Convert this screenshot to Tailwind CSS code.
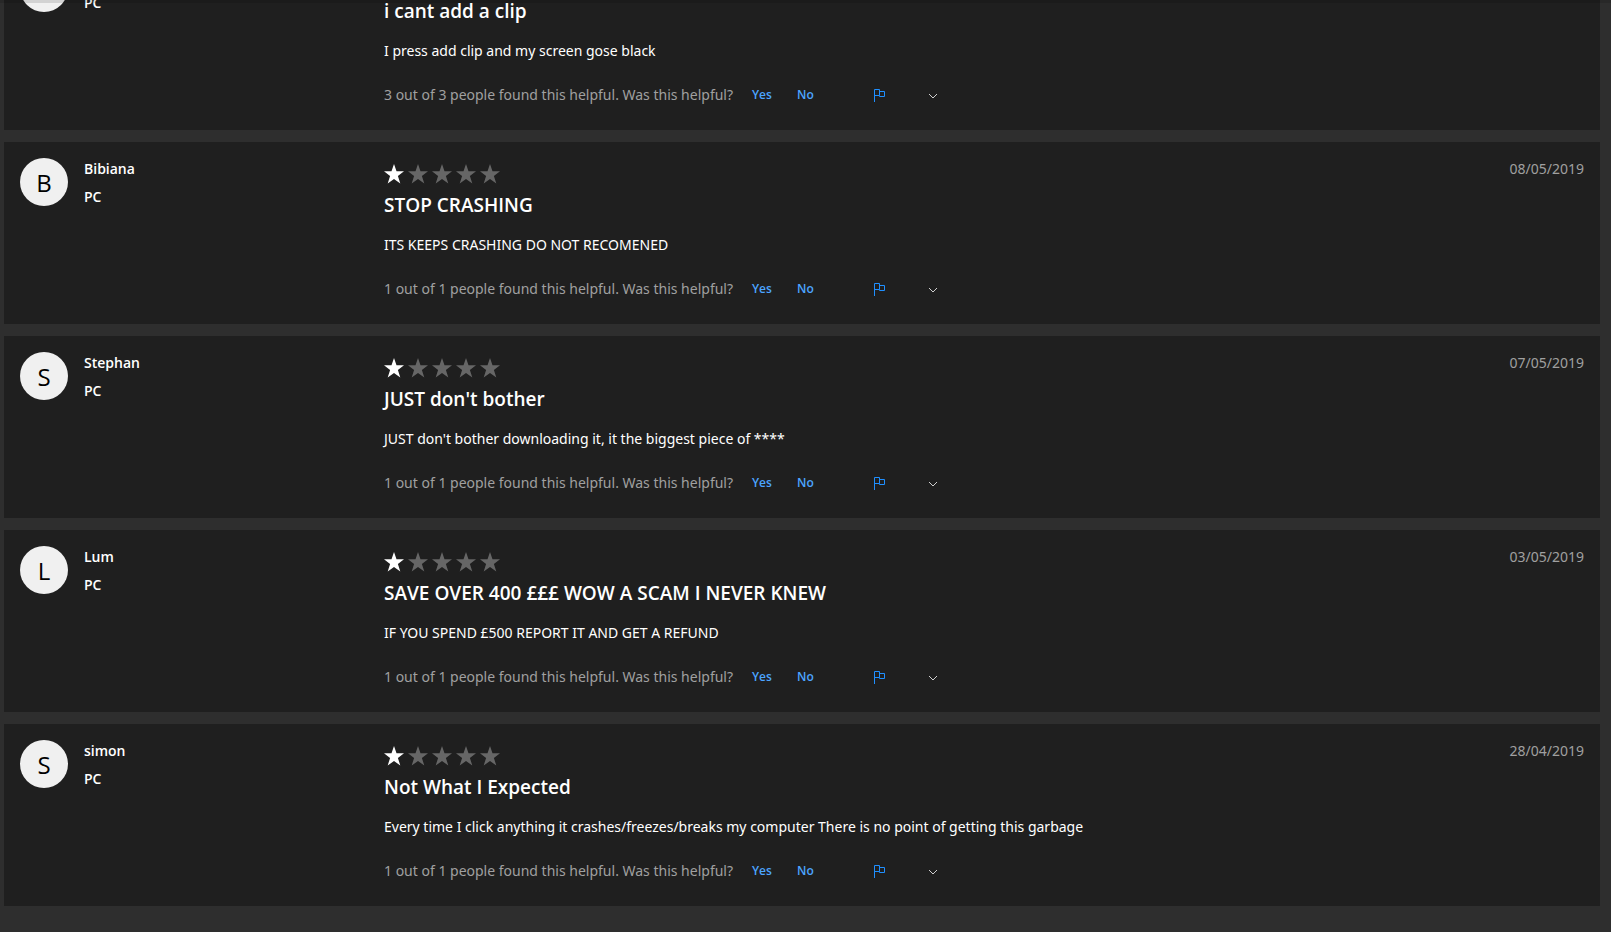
<!DOCTYPE html>
<html lang="en-GB">
<head>
  <meta charset="UTF-8" />
  <meta name="viewport" content="width=device-width, initial-scale=1.0" />
  <title>Reviews</title>
  <script src="https://cdn.jsdelivr.net/npm/@tailwindcss/browser@4"></script>
</head>
<body class="min-h-screen bg-[#2e2e2e] font-['Open_Sans','Noto_Sans',sans-serif] text-sm text-white overflow-x-hidden">

  <!-- Icons -->
  <svg class="hidden">
    <symbol id="star" viewBox="0 0 24 24">
      <path fill="currentColor" d="M10 2l2.5 7.2H20l-6.1 4.7 2.4 7.6L10 17l-6.3 4.5 2.4-7.6L0 9.2h7.5z" />
    </symbol>
    <symbol id="flag" viewBox="0 0 12 13">
      <path fill="none" stroke="currentColor" d="M.5 13V.5h5v6H.5M5.5 2.5h5v5h-5v-1" />
    </symbol>
    <symbol id="chevron" viewBox="0 0 10 6">
      <path fill="none" stroke="currentColor" d="M1 1l4 4 4-4" />
    </symbol>
  </svg>

  <!-- Shadow of the page header -->
  <div class="fixed inset-x-0 top-0 h-[3px] bg-black/12"></div>

  <main class="-mt-[52px] ml-1 mr-[11px] space-y-3">

    <!-- Review scrolled half under the header -->
    <article class="flex bg-[#1f1f1f] px-4 pt-4 pb-[25px]">
      <div class="flex w-[364px] shrink-0 gap-4">
        <div class="size-12 rounded-full bg-[#f0f0f0]"></div>
        <p class="pt-[29px] leading-5 font-semibold">PC</p>
      </div>
      <div class="grow pt-[33px]">
        <h2 class="text-[19px] leading-7 font-semibold">i cant add a clip</h2>
        <p class="mt-4 font-['Noto_Sans','Open_Sans',sans-serif] leading-5">I press add clip and my screen gose black</p>
        <div class="mt-6 flex h-5 items-center leading-5">
          <p class="w-[368px] whitespace-nowrap font-['Noto_Sans','Open_Sans',sans-serif] text-[#a0a0a0]">3 out of 3 people found this helpful. Was this helpful?</p>
          <button class="w-[45px] text-left text-xs font-semibold text-[#4ca5ff]">Yes</button>
          <button class="w-[77px] text-left text-xs font-semibold text-[#4ca5ff]">No</button>
          <button class="w-[54px] text-left text-[#1f8fff]" aria-label="Report"><svg class="h-[13px] w-3"><use href="#flag" /></svg></button>
          <button class="pt-0.5 text-[#d0d0d0]" aria-label="More"><svg class="h-1.5 w-2.5"><use href="#chevron" /></svg></button>
        </div>
      </div>
    </article>

    <article class="flex bg-[#1f1f1f] px-4 pt-4 pb-[25px]">
      <div class="flex w-[364px] shrink-0 gap-4">
        <div class="flex size-12 items-center justify-center rounded-full bg-[#f0f0f0] pt-0.5 text-2xl text-black">B</div>
        <div class="pt-px leading-5">
          <p class="font-semibold">Bibiana</p>
          <p class="mt-2 font-semibold">PC</p>
        </div>
      </div>
      <div class="grow pt-1">
        <div class="flex" role="img" aria-label="1 out of 5 stars">
          <svg class="size-6"><use href="#star" /></svg>
          <svg class="size-6 text-[#666]"><use href="#star" /></svg>
          <svg class="size-6 text-[#666]"><use href="#star" /></svg>
          <svg class="size-6 text-[#666]"><use href="#star" /></svg>
          <svg class="size-6 text-[#666]"><use href="#star" /></svg>
        </div>
        <h2 class="mt-[5px] text-[19px] leading-7 font-semibold">STOP CRASHING</h2>
        <p class="mt-4 font-['Noto_Sans','Open_Sans',sans-serif] leading-5">ITS KEEPS CRASHING DO NOT RECOMENED</p>
        <div class="mt-6 flex h-5 items-center leading-5">
          <p class="w-[368px] whitespace-nowrap font-['Noto_Sans','Open_Sans',sans-serif] text-[#a0a0a0]">1 out of 1 people found this helpful. Was this helpful?</p>
          <button class="w-[45px] text-left text-xs font-semibold text-[#4ca5ff]">Yes</button>
          <button class="w-[77px] text-left text-xs font-semibold text-[#4ca5ff]">No</button>
          <button class="w-[54px] text-left text-[#1f8fff]" aria-label="Report"><svg class="h-[13px] w-3"><use href="#flag" /></svg></button>
          <button class="pt-0.5 text-[#d0d0d0]" aria-label="More"><svg class="h-1.5 w-2.5"><use href="#chevron" /></svg></button>
        </div>
      </div>
      <time class="pt-px font-['Noto_Sans','Open_Sans',sans-serif] leading-5 text-[#a0a0a0]" datetime="2019-05-08">08/05/2019</time>
    </article>

    <article class="flex bg-[#1f1f1f] px-4 pt-4 pb-[25px]">
      <div class="flex w-[364px] shrink-0 gap-4">
        <div class="flex size-12 items-center justify-center rounded-full bg-[#f0f0f0] pt-0.5 text-2xl text-black">S</div>
        <div class="pt-px leading-5">
          <p class="font-semibold">Stephan</p>
          <p class="mt-2 font-semibold">PC</p>
        </div>
      </div>
      <div class="grow pt-1">
        <div class="flex" role="img" aria-label="1 out of 5 stars">
          <svg class="size-6"><use href="#star" /></svg>
          <svg class="size-6 text-[#666]"><use href="#star" /></svg>
          <svg class="size-6 text-[#666]"><use href="#star" /></svg>
          <svg class="size-6 text-[#666]"><use href="#star" /></svg>
          <svg class="size-6 text-[#666]"><use href="#star" /></svg>
        </div>
        <h2 class="mt-[5px] text-[19px] leading-7 font-semibold">JUST don't bother</h2>
        <p class="mt-4 font-['Noto_Sans','Open_Sans',sans-serif] leading-5">JUST don't bother downloading it, it the biggest piece of ****</p>
        <div class="mt-6 flex h-5 items-center leading-5">
          <p class="w-[368px] whitespace-nowrap font-['Noto_Sans','Open_Sans',sans-serif] text-[#a0a0a0]">1 out of 1 people found this helpful. Was this helpful?</p>
          <button class="w-[45px] text-left text-xs font-semibold text-[#4ca5ff]">Yes</button>
          <button class="w-[77px] text-left text-xs font-semibold text-[#4ca5ff]">No</button>
          <button class="w-[54px] text-left text-[#1f8fff]" aria-label="Report"><svg class="h-[13px] w-3"><use href="#flag" /></svg></button>
          <button class="pt-0.5 text-[#d0d0d0]" aria-label="More"><svg class="h-1.5 w-2.5"><use href="#chevron" /></svg></button>
        </div>
      </div>
      <time class="pt-px font-['Noto_Sans','Open_Sans',sans-serif] leading-5 text-[#a0a0a0]" datetime="2019-05-07">07/05/2019</time>
    </article>

    <article class="flex bg-[#1f1f1f] px-4 pt-4 pb-[25px]">
      <div class="flex w-[364px] shrink-0 gap-4">
        <div class="flex size-12 items-center justify-center rounded-full bg-[#f0f0f0] pt-0.5 text-2xl text-black">L</div>
        <div class="pt-px leading-5">
          <p class="font-semibold">Lum</p>
          <p class="mt-2 font-semibold">PC</p>
        </div>
      </div>
      <div class="grow pt-1">
        <div class="flex" role="img" aria-label="1 out of 5 stars">
          <svg class="size-6"><use href="#star" /></svg>
          <svg class="size-6 text-[#666]"><use href="#star" /></svg>
          <svg class="size-6 text-[#666]"><use href="#star" /></svg>
          <svg class="size-6 text-[#666]"><use href="#star" /></svg>
          <svg class="size-6 text-[#666]"><use href="#star" /></svg>
        </div>
        <h2 class="mt-[5px] text-[19px] leading-7 font-semibold">SAVE OVER 400 £££ WOW A SCAM I NEVER KNEW</h2>
        <p class="mt-4 font-['Noto_Sans','Open_Sans',sans-serif] leading-5">IF YOU SPEND £500 REPORT IT AND GET A REFUND</p>
        <div class="mt-6 flex h-5 items-center leading-5">
          <p class="w-[368px] whitespace-nowrap font-['Noto_Sans','Open_Sans',sans-serif] text-[#a0a0a0]">1 out of 1 people found this helpful. Was this helpful?</p>
          <button class="w-[45px] text-left text-xs font-semibold text-[#4ca5ff]">Yes</button>
          <button class="w-[77px] text-left text-xs font-semibold text-[#4ca5ff]">No</button>
          <button class="w-[54px] text-left text-[#1f8fff]" aria-label="Report"><svg class="h-[13px] w-3"><use href="#flag" /></svg></button>
          <button class="pt-0.5 text-[#d0d0d0]" aria-label="More"><svg class="h-1.5 w-2.5"><use href="#chevron" /></svg></button>
        </div>
      </div>
      <time class="pt-px font-['Noto_Sans','Open_Sans',sans-serif] leading-5 text-[#a0a0a0]" datetime="2019-05-03">03/05/2019</time>
    </article>

    <article class="flex bg-[#1f1f1f] px-4 pt-4 pb-[25px]">
      <div class="flex w-[364px] shrink-0 gap-4">
        <div class="flex size-12 items-center justify-center rounded-full bg-[#f0f0f0] pt-0.5 text-2xl text-black">S</div>
        <div class="pt-px leading-5">
          <p class="font-semibold">simon</p>
          <p class="mt-2 font-semibold">PC</p>
        </div>
      </div>
      <div class="grow pt-1">
        <div class="flex" role="img" aria-label="1 out of 5 stars">
          <svg class="size-6"><use href="#star" /></svg>
          <svg class="size-6 text-[#666]"><use href="#star" /></svg>
          <svg class="size-6 text-[#666]"><use href="#star" /></svg>
          <svg class="size-6 text-[#666]"><use href="#star" /></svg>
          <svg class="size-6 text-[#666]"><use href="#star" /></svg>
        </div>
        <h2 class="mt-[5px] text-[19px] leading-7 font-semibold">Not What I Expected</h2>
        <p class="mt-4 font-['Noto_Sans','Open_Sans',sans-serif] leading-5">Every time I click anything it crashes/freezes/breaks my computer There is no point of getting this garbage</p>
        <div class="mt-6 flex h-5 items-center leading-5">
          <p class="w-[368px] whitespace-nowrap font-['Noto_Sans','Open_Sans',sans-serif] text-[#a0a0a0]">1 out of 1 people found this helpful. Was this helpful?</p>
          <button class="w-[45px] text-left text-xs font-semibold text-[#4ca5ff]">Yes</button>
          <button class="w-[77px] text-left text-xs font-semibold text-[#4ca5ff]">No</button>
          <button class="w-[54px] text-left text-[#1f8fff]" aria-label="Report"><svg class="h-[13px] w-3"><use href="#flag" /></svg></button>
          <button class="pt-0.5 text-[#d0d0d0]" aria-label="More"><svg class="h-1.5 w-2.5"><use href="#chevron" /></svg></button>
        </div>
      </div>
      <time class="pt-px font-['Noto_Sans','Open_Sans',sans-serif] leading-5 text-[#a0a0a0]" datetime="2019-04-28">28/04/2019</time>
    </article>

  </main>

</body>
</html>
